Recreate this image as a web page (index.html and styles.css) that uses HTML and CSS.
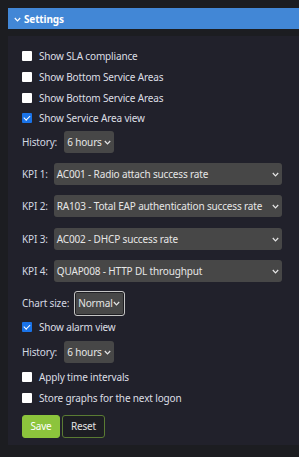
FILE: index.html
```html
<!DOCTYPE html>
<html lang="en">
  <head>
    <meta charset="UTF-8" />
    <meta name="viewport" content="width=device-width, initial-scale=1.0" />
    <title>Settings</title>
    <link rel="stylesheet" href="styles.css">
  </head>
  <body>
    <!-- Collapsible header -->
    <div class="panel-header">
      <svg class="header-chev" width="7" height="5" viewBox="0 0 7 5">
        <path d="M0.8 1 L3.5 3.8 L6.2 1" fill="none" stroke="#fff" stroke-width="1.2" />
      </svg>
      <span>Settings</span>
    </div>

    <div class="panel-body">
      <label class="check-row r-first"><span class="box"></span>Show SLA compliance</label>
      <label class="check-row"><span class="box"></span>Show Bottom Service Areas</label>
      <label class="check-row"><span class="box"></span>Show Bottom Service Areas</label>
      <label class="check-row"><span class="box checked"></span>Show Service Area view</label>

      <div class="field-row history-row">
        <span class="field-label">History:</span>
        <div class="select select-small">6 hours<svg class="chev" width="7" height="5" viewBox="0 0 7 5"><path d="M0.8 1 L3.5 3.8 L6.2 1" fill="none" stroke="#e6e6e6" stroke-width="1.2" /></svg></div>
      </div>

      <div class="field-row kpi-row kpi-first">
        <span class="field-label">KPI 1:</span>
        <div class="select select-wide">AC001 - Radio attach success rate<svg class="chev" width="7" height="5" viewBox="0 0 7 5"><path d="M0.8 1 L3.5 3.8 L6.2 1" fill="none" stroke="#e6e6e6" stroke-width="1.2" /></svg></div>
      </div>
      <div class="field-row kpi-row">
        <span class="field-label">KPI 2:</span>
        <div class="select select-wide">RA103 - Total EAP authentication success rate<svg class="chev" width="7" height="5" viewBox="0 0 7 5"><path d="M0.8 1 L3.5 3.8 L6.2 1" fill="none" stroke="#e6e6e6" stroke-width="1.2" /></svg></div>
      </div>
      <div class="field-row kpi-row">
        <span class="field-label">KPI 3:</span>
        <div class="select select-wide">AC002 - DHCP success rate<svg class="chev" width="7" height="5" viewBox="0 0 7 5"><path d="M0.8 1 L3.5 3.8 L6.2 1" fill="none" stroke="#e6e6e6" stroke-width="1.2" /></svg></div>
      </div>
      <div class="field-row kpi-row">
        <span class="field-label">KPI 4:</span>
        <div class="select select-wide">QUAP008 - HTTP DL throughput<svg class="chev" width="7" height="5" viewBox="0 0 7 5"><path d="M0.8 1 L3.5 3.8 L6.2 1" fill="none" stroke="#e6e6e6" stroke-width="1.2" /></svg></div>
      </div>

      <div class="field-row chart-row">
        <span class="field-label">Chart size:</span>
        <div class="select select-focus">Normal<svg class="chev" width="7" height="5" viewBox="0 0 7 5"><path d="M0.8 1 L3.5 3.8 L6.2 1" fill="none" stroke="#e6e6e6" stroke-width="1.2" /></svg></div>
      </div>

      <label class="check-row alarm-row"><span class="box checked"></span>Show alarm view</label>

      <div class="field-row history-row2">
        <span class="field-label">History:</span>
        <div class="select select-small">6 hours<svg class="chev" width="7" height="5" viewBox="0 0 7 5"><path d="M0.8 1 L3.5 3.8 L6.2 1" fill="none" stroke="#e6e6e6" stroke-width="1.2" /></svg></div>
      </div>

      <label class="check-row apply-row"><span class="box"></span>Apply time intervals</label>
      <label class="check-row"><span class="box"></span>Store graphs for the next logon</label>

      <div class="buttons">
        <button class="btn btn-save">Save</button>
        <button class="btn btn-reset">Reset</button>
      </div>
    </div>
  </body>
</html>
```

FILE: styles.css
```css
body {
  margin: 0;
  padding: 8px 0 10px 8px;
  background: #1c1d21;
  font-family: "Noto Sans", "Open Sans", Arial, sans-serif;
  font-size: 10px;
  letter-spacing: -0.15px;
  color: #dcdee4;
}
/* Blue collapsible header */
.panel-header {
  height: 21px;
  background: #4287d6;
  color: #fff;
  font-weight: 700;
  font-size: 10px;
  display: flex;
  align-items: center;
  padding-left: 6px;
  gap: 3px;
}
.header-chev {
  margin-top: 1px;
}
.panel-body {
  margin-top: 7px;
  background: #21212b;
  padding: 10px 0 7px 14px;
  display: flex;
  flex-direction: column;
}
.check-row {
  height: 20.67px;
  display: flex;
  align-items: center;
  gap: 7px;
}
.box {
  width: 10px;
  height: 10px;
  background: #fff;
  border-radius: 1px;
  position: relative;
}
.box.checked {
  background: #1a73e8;
}
.box.checked::after {
  content: "";
  position: absolute;
  left: 3px;
  top: 1px;
  width: 2.5px;
  height: 5px;
  border: solid #fff;
  border-width: 0 1.5px 1.5px 0;
  transform: rotate(45deg);
}
.field-row {
  display: flex;
  align-items: center;
}
.field-label {
  color: #d4d8e2;
}
.history-row {
  margin-top: 2px;
  gap: 7px;
}
.kpi-row {
  margin-top: 10.5px;
  gap: 6px;
}
.kpi-first {
  margin-top: 10px;
}
.chart-row {
  margin-top: 8.5px;
  gap: 5px;
}
.alarm-row {
  margin-top: 1.5px;
}
.history-row2 {
  margin-top: 3.5px;
  gap: 7px;
}
.apply-row {
  margin-top: 3.5px;
}
/* Custom select look */
.select {
  position: relative;
  box-sizing: border-box;
  height: 22px;
  line-height: 22px;
  background: #474747;
  border-radius: 3px;
  padding-left: 3px;
  color: #e6e6e6;
  white-space: nowrap;
}
.select .chev {
  position: absolute;
  right: 3px;
  top: 9px;
}
.select-small {
  width: 50px;
}
.select-wide {
  width: 228px;
}
.select-focus {
  width: 51px;
  height: 25px;
  line-height: 23px;
  border: 1px solid #c4c4c4;
  box-shadow: inset 0 0 0 1px #1e1e22;
  padding-left: 3px;
}
.select-focus .chev {
  top: 9px;
  right: 4px;
}
.buttons {
  margin-top: 6.5px;
  display: flex;
  gap: 2px;
}
.btn {
  font-family: inherit;
  font-size: 10px;
  letter-spacing: -0.15px;
  height: 23px;
  border-radius: 3px;
  padding: 0;
  cursor: pointer;
}
.btn-save {
  width: 38px;
  background: #8cc43c;
  border: 1px solid #8cc43c;
  color: #fff;
}
.btn-reset {
  width: 43px;
  background: #1d1e23;
  border: 1px solid #5a7b33;
  color: #e2e2e2;
}
```
